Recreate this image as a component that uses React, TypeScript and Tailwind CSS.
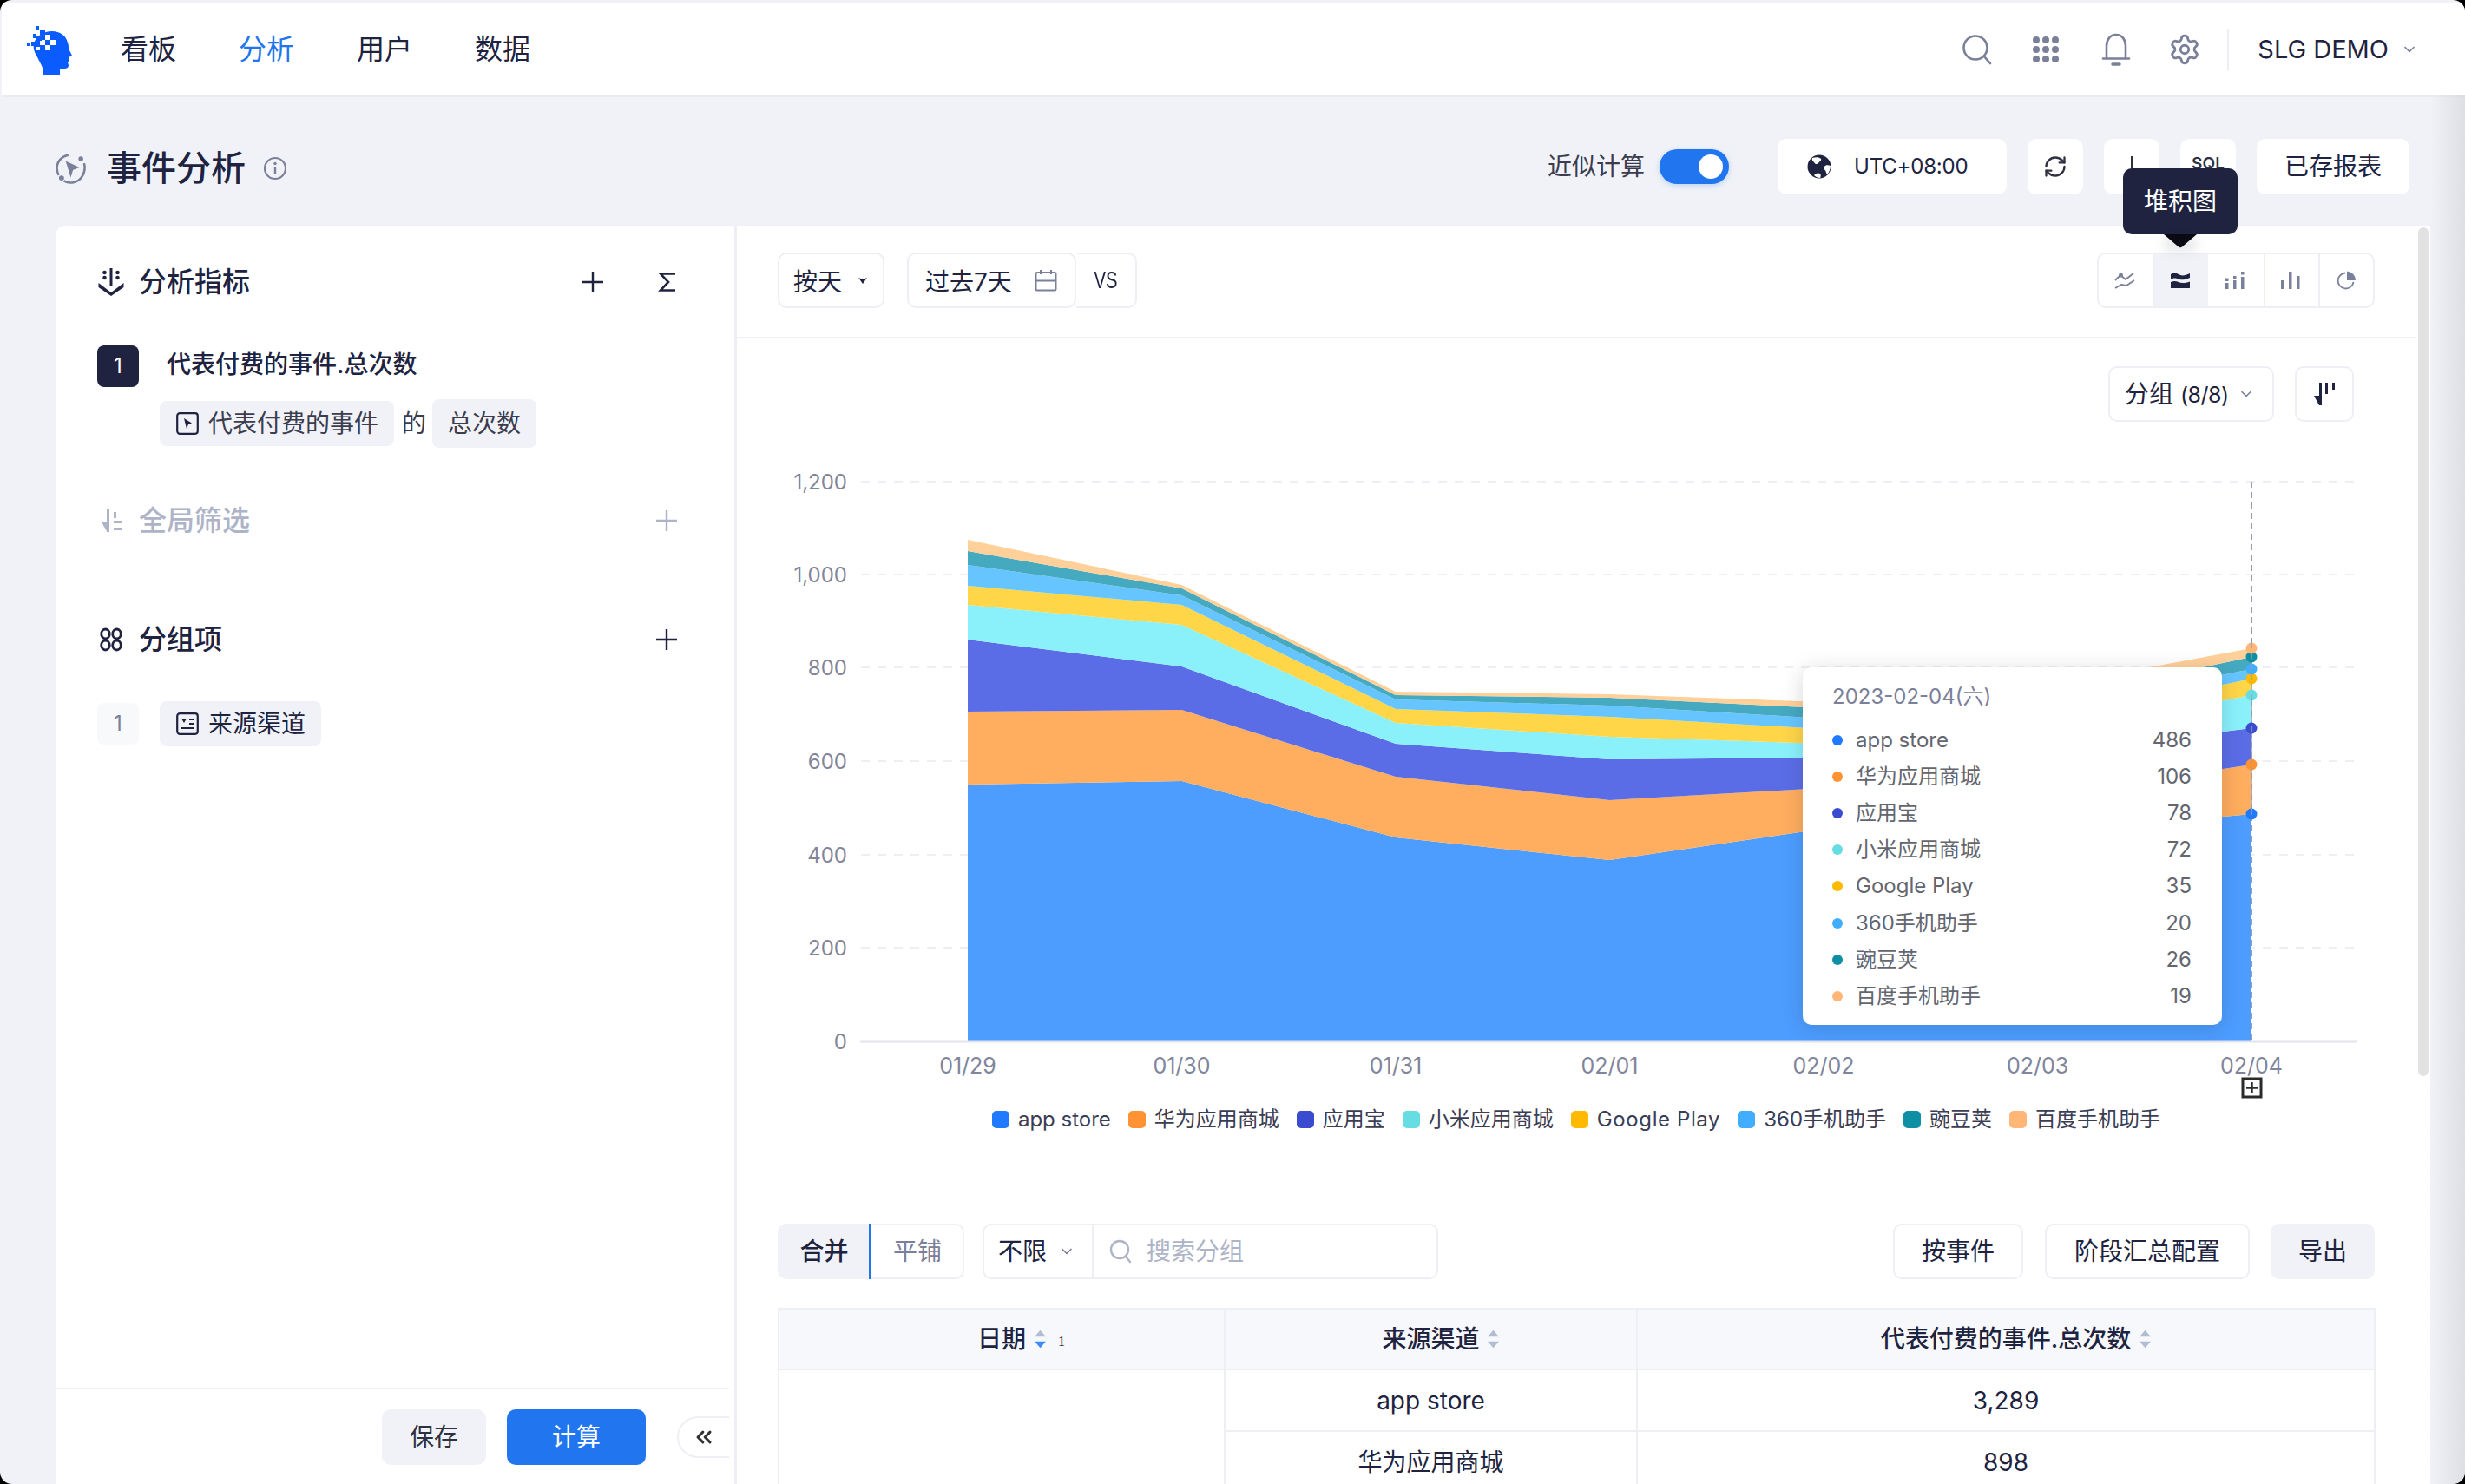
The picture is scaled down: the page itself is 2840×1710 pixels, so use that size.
import React from "react";
import { ChevronDown, Settings, RefreshCw, ChevronsLeft } from "lucide-react";

const xs = [1115, 1361.5, 1608, 1854.5, 2101, 2347.5, 2594];
const series = [
  { name: "app store", value: "486", fill: "#4c9dff", solid: "#1f7aff", tops: [904, 900, 965, 991, 955, 961, 938] },
  { name: "华为应用商城", value: "106", fill: "#ffad5e", solid: "#ff9233", tops: [820, 818, 895, 922, 908, 919, 881] },
  { name: "应用宝", value: "78", fill: "#5b6de6", solid: "#3a4bd0", tops: [737, 768, 857, 875, 873, 870, 839] },
  { name: "小米应用商城", value: "72", fill: "#8af1fb", solid: "#66dde3", tops: [697, 720, 833, 849, 857, 848, 801] },
  { name: "Google Play", value: "35", fill: "#ffd647", solid: "#ffb900", tops: [675, 697, 817, 826, 840, 835, 782] },
  { name: "360手机助手", value: "20", fill: "#66c5ff", solid: "#40adff", tops: [651, 686, 806, 813, 828, 820, 771] },
  { name: "豌豆荚", value: "26", fill: "#45a9c0", solid: "#0f8fa3", tops: [635, 678, 801, 804, 816, 809, 757] },
  { name: "百度手机助手", value: "19", fill: "#ffd099", solid: "#ffb677", tops: [622, 674, 797, 800, 809, 793, 747] },
];
const yTicks = [
  ["1,200", 555],
  ["1,000", 662],
  ["800", 769],
  ["600", 877],
  ["400", 985],
  ["200", 1092],
  ["0", 1200],
] as const;
const xLabels = ["01/29", "01/30", "01/31", "02/01", "02/02", "02/03", "02/04"];

function polygonPoints(i: number) {
  const top = series[i].tops.map((y, k) => `${xs[k]},${y}`);
  const lower = i === 0 ? xs.map((x) => `${x},1199`) : series[i - 1].tops.map((y, k) => `${xs[k]},${y}`);
  return [...top, ...lower.reverse()].join(" ");
}

function Logo() {
  return (
    <svg width="56" height="58" viewBox="0 0 56 58">
      <path
        d="M32 8c9 0 16 5 18 13 1 3 1 5 1 7l4 8-4 2 1 4-2 2 1 3c0 4-3 4-7 4l-3 1v6H21v-8c-2-5-4-8-7-14-3-5-4-9-3-14C14 13 22 8 32 8z"
        fill="#0b5cff"
      />
      <g fill="#fff">
        <rect x="24" y="12" width="6" height="6" />
        <rect x="18" y="18" width="6" height="6" />
        <rect x="30" y="18" width="6" height="6" />
        <rect x="24" y="24" width="6" height="6" />
        <rect x="14" y="26" width="4" height="4" />
      </g>
      <g fill="#0b5cff">
        <rect x="14" y="2" width="3" height="4" />
        <rect x="18" y="7" width="6" height="5" />
        <rect x="10" y="11" width="4" height="5" />
        <rect x="14" y="14" width="6" height="5" />
        <rect x="24" y="18" width="6" height="6" />
        <rect x="3" y="21" width="3" height="4" />
        <rect x="8" y="20" width="5" height="5" />
        <rect x="18" y="24" width="6" height="6" />
      </g>
    </svg>
  );
}

function SearchIcon() {
  return (
    <svg width="36" height="36" viewBox="0 0 36 36" fill="none" stroke="#7a8099" strokeWidth="2.6" strokeLinecap="round">
      <circle cx="16" cy="16" r="13.5" />
      <path d="M26 26l7 8" />
    </svg>
  );
}

function GridIcon() {
  const pts = [6, 17, 28];
  return (
    <svg width="34" height="34" viewBox="0 0 34 34" fill="#7a8099">
      {pts.map((y) => pts.map((x) => <circle key={`${x}-${y}`} cx={x} cy={y} r="4" />))}
    </svg>
  );
}

function BellIcon() {
  return (
    <svg width="36" height="38" viewBox="0 0 36 38" fill="none" stroke="#7a8099" strokeWidth="2.6" strokeLinecap="round">
      <path d="M7 29V15C7 7.5 11.5 2 18 2s11 5.500 11 13v14" />
      <path d="M3 29.500h30" />
      <path d="M14 36h8" strokeWidth="3.500" />
    </svg>
  );
}

function GlobeIcon() {
  return (
    <svg width="28" height="28" viewBox="0 0 28 28">
      <circle cx="14" cy="14" r="13.500" fill="#20233f" />
      <path d="M6 4c4-1 8-1 10 1 1 2-2 3-3 5-2 2-4 1-5-1-1-1-3-3-2-5z" fill="#fff" />
      <path d="M27 13c-3-1-6-1-7 1-2 3 2 4 2 7l1 2c2-2 4-6 4-10z" fill="#fff" />
      <path d="M8 24c2-3 5-3 7-2 1 1 1 3 0 5-3 0-5-1-7-3z" fill="#fff" />
    </svg>
  );
}

function EventIcon() {
  return (
    <svg width="36" height="36" viewBox="0 0 34 34" fill="none" stroke="#7a8099" strokeWidth="2.400">
      <path d="M14 2.500C6 4 1.500 10 1.500 17c0 3 .7 5 2 7.500" />
      <path d="M9 30.500c6 3.500 15 2.500 19.500-4 3-4.500 4-10 2.500-15" />
      <circle cx="27.500" cy="6.500" r="2.600" fill="#7a8099" stroke="none" />
      <circle cx="6.500" cy="27.500" r="2.800" fill="#7a8099" stroke="none" />
      <path d="M11 9l15 7-7 3-2.500 8z" fill="#7a8099" stroke="none" />
    </svg>
  );
}

function InfoIcon() {
  return (
    <svg width="28" height="28" viewBox="0 0 28 28" fill="none" stroke="#7a8099" strokeWidth="2.200">
      <circle cx="14" cy="14" r="12" />
      <path d="M14 12.500v8" strokeWidth="2.400" />
      <circle cx="14" cy="8.500" r="1.700" fill="#7a8099" stroke="none" />
    </svg>
  );
}

function MetricIcon() {
  return (
    <svg width="32" height="34" viewBox="0 0 32 34" fill="#20233f">
      <rect x="14.500" y="1" width="3" height="21" />
      <circle cx="8.500" cy="6" r="2.300" />
      <circle cx="8.500" cy="12" r="2.300" />
      <circle cx="23.500" cy="6" r="2.300" />
      <circle cx="23.500" cy="12" r="2.300" />
      <path d="M1.500 18l14.500 11 14.500-11v5L16 33 1.500 23z" />
    </svg>
  );
}

function FilterIcon() {
  return (
    <svg width="26" height="28" viewBox="0 0 26 28" fill="#aeb4c8">
      <rect x="7" y="1" width="3" height="26" />
      <path d="M7 16v10L1 16z" />
      <rect x="15" y="4" width="3" height="7" />
      <rect x="15" y="14" width="9" height="3" />
      <rect x="15" y="22" width="9" height="3" />
    </svg>
  );
}

function GroupIcon() {
  return (
    <svg width="26" height="28" viewBox="0 0 26 28" fill="none" stroke="#20233f" strokeWidth="2.800">
      <ellipse cx="6.500" cy="7.500" rx="4.800" ry="5.500" />
      <ellipse cx="19.500" cy="7.500" rx="4.800" ry="5.500" />
      <ellipse cx="6.500" cy="20.500" rx="4.800" ry="5.500" />
      <ellipse cx="19.500" cy="20.500" rx="4.800" ry="5.500" />
    </svg>
  );
}

function PlusIcon({ color = "#20233f" }: { color?: string }) {
  return (
    <svg width="26" height="26" viewBox="0 0 26 26" stroke={color} strokeWidth="2.400">
      <path d="M13 1v24M1 13h24" />
    </svg>
  );
}

function SigmaIcon() {
  return (
    <svg width="22" height="24" viewBox="0 0 22 24" fill="none" stroke="#20233f" strokeWidth="2.600">
      <path d="M20 2.500H3l9 9.500-9 9.500h17" />
    </svg>
  );
}

function CursorBox() {
  return (
    <svg width="26" height="26" viewBox="0 0 26 26" fill="none">
      <rect x="1.200" y="1.200" width="23.600" height="23.600" rx="3" stroke="#20233f" strokeWidth="2.200" />
      <path d="M9 7l9 5.500-4 1.500-2 5z" fill="#20233f" />
    </svg>
  );
}

function FieldBox() {
  return (
    <svg width="26" height="26" viewBox="0 0 26 26" fill="none">
      <rect x="1.200" y="1.200" width="23.600" height="23.600" rx="3" stroke="#20233f" strokeWidth="2.200" />
      <path d="M6 7h6l-3 5z" fill="#20233f" />
      <path d="M15 8h5M15 13h5M6 18h14" stroke="#20233f" strokeWidth="2" />
    </svg>
  );
}

function LineIcon() {
  return (
    <svg width="24" height="22" viewBox="0 0 24 22" fill="none" stroke="#7a8099" strokeWidth="1.800">
      <path d="M1 11l6-6 6 5 9-7" />
      <path d="M1 20l7-4 6 1 9-6" />
      <circle cx="7.500" cy="5" r="2.500" fill="#7a8099" stroke="none" />
    </svg>
  );
}

function StackIcon() {
  return (
    <svg width="22" height="18" viewBox="0 0 22 18" fill="#20233f">
      <path d="M0 2c3-2 6-2 9 0s7 2 13-1v5c-6 2.500-9 3-13 1.500S3 6 0 8z" />
      <path d="M0 11c3-1.500 6-1.500 9 0s7 1.500 13-.5V18H0z" />
    </svg>
  );
}

function DotBarIcon() {
  return (
    <svg width="24" height="22" viewBox="0 0 24 22" fill="#7a8099">
      <rect x="1" y="14" width="3.500" height="7" />
      <rect x="1" y="8.500" width="3.500" height="3.500" />
      <rect x="10" y="11" width="3.500" height="10" />
      <rect x="10" y="6" width="3.500" height="3.500" />
      <rect x="19" y="7" width="3.500" height="14" />
      <rect x="19" y="1" width="3.500" height="3.500" />
    </svg>
  );
}

function BarIcon() {
  return (
    <svg width="24" height="22" viewBox="0 0 24 22" fill="#7a8099">
      <rect x="1" y="11" width="3.500" height="10" />
      <rect x="10" y="1" width="3.500" height="20" />
      <rect x="19" y="6" width="3.500" height="15" />
    </svg>
  );
}

function PieIcon() {
  return (
    <svg width="24" height="24" viewBox="0 0 24 24">
      <path d="M11 3.500A9 9 0 1 0 20.500 14" fill="none" stroke="#7a8099" strokeWidth="1.800" />
      <path d="M13 1.500A10.500 10.500 0 0 1 23 12H13z" fill="#7a8099" />
    </svg>
  );
}

function SortDescIcon() {
  return (
    <svg width="26" height="28" viewBox="0 0 26 28" fill="#20233f">
      <rect x="7" y="1" width="3" height="26" />
      <path d="M7 16v11L1 16z" />
      <rect x="14" y="1" width="3" height="13" />
      <rect x="22" y="1" width="3" height="8" />
    </svg>
  );
}

function SortMark({ active = false }: { active?: boolean }) {
  return (
    <svg width="15" height="24" viewBox="0 0 16 26" className="shrink-0">
      <path d="M8 2l7 8H1z" fill="#b0bdd3" />
      <path d="M8 24l7-8H1z" fill={active ? "#3d8bff" : "#b0bdd3"} />
    </svg>
  );
}

function App() {
  return (
    <div className="w-[2840px] h-[1710px] bg-black overflow-hidden font-['Inter','Noto_Sans_CJK_SC',sans-serif] text-[#20233f]">
      <div className="relative w-full h-full rounded-[14px] overflow-hidden bg-[#f0f2f7] pt-[3px] pl-[2px] flex flex-col">
        {/* top bar */}
        <header className="h-[109px] shrink-0 bg-white border-b-2 border-[#e9ebf1] flex items-center pl-[26px] pr-[54px]">
          <Logo />
          <nav className="flex items-center gap-[72px] ml-[55px] text-[32px]">
            <span>看板</span>
            <span className="text-[#2176f0]">分析</span>
            <span>用户</span>
            <span>数据</span>
          </nav>
          <div className="ml-auto flex items-center">
            <SearchIcon />
            <div className="ml-[44px]"><GridIcon /></div>
            <div className="ml-[46px]"><BellIcon /></div>
            <Settings size={38} strokeWidth={1.8} color="#7a8099" className="ml-[42px]" />
            <div className="w-[2px] h-[48px] bg-[#eceef3] ml-[30px]" />
            <span className="ml-[33px] text-[29px]">SLG DEMO</span>
            <ChevronDown size={20} color="#7a8099" className="ml-[14px]" />
          </div>
        </header>

        {/* page header */}
        <div className="h-[148px] shrink-0 flex items-start pt-[48px] pl-[62px] pr-[64px]">
          <div className="h-[64px] flex items-center mt-[2px]">
            <EventIcon />
            <h1 className="ml-[23px] text-[40px] font-medium leading-none">事件分析</h1>
            <div className="ml-[20px]"><InfoIcon /></div>
          </div>
          <div className="ml-auto flex items-center h-[64px]">
            <span className="text-[28px] text-[#3b3d4f]">近似计算</span>
            <div className="ml-[17px] w-[80px] h-[40px] rounded-full bg-[#2176f0] flex items-center justify-end pr-[7px] shadow-[0_2px_6px_rgba(33,118,240,0.25)]">
              <div className="w-[28px] h-[28px] rounded-full bg-white" />
            </div>
            <div className="ml-[56px] w-[264px] h-[64px] rounded-[10px] bg-white flex items-center pl-[34px]">
              <GlobeIcon />
              <span className="ml-[26px] text-[24px] tracking-[-0.2px]">UTC+08:00</span>
            </div>
            <div className="ml-[24px] w-[64px] h-[64px] rounded-[10px] bg-white flex items-center justify-center">
              <RefreshCw size={28} strokeWidth={2} color="#2f3040" />
            </div>
            <div className="ml-[24px] w-[64px] h-[64px] rounded-[10px] bg-white flex justify-center pt-[20px]">
              <div className="w-[3px] h-[24px] bg-[#2f3040]" />
            </div>
            <div className="ml-[24px] w-[64px] h-[64px] rounded-[10px] bg-white flex justify-center pt-[15px] text-[19px] font-semibold text-[#2f3040]">
              SQL
            </div>
            <div className="ml-[24px] w-[176px] h-[64px] rounded-[10px] bg-white flex items-center justify-center text-[28px]">
              已存报表
            </div>
          </div>
        </div>

        {/* main */}
        <main className="flex-1 min-h-0 flex pl-[62px] pr-[40px]">
          {/* left panel */}
          <aside className="w-[785px] shrink-0 h-full bg-white rounded-tl-[12px] border-r-[3px] border-[#eeeff4] flex flex-col">
            <div className="pl-[48px] pr-[65px] pt-[41px]">
              <div className="h-[48px] flex items-center">
                <MetricIcon />
                <span className="ml-[16px] text-[32px] font-medium">分析指标</span>
                <div className="ml-auto flex items-center">
                  <PlusIcon />
                  <div className="ml-[62px] mr-[1px]"><SigmaIcon /></div>
                </div>
              </div>

              <div className="mt-[49px] h-[48px] flex items-center">
                <div className="w-[48px] h-[48px] rounded-[8px] bg-[#20233f] text-white text-[24px] flex items-center justify-center">1</div>
                <span className="ml-[32px] text-[28px] font-medium leading-[44px] -mt-[4px]">代表付费的事件.总次数</span>
              </div>
              <div className="mt-[14px] h-[56px] pl-[72px] flex items-center text-[28px] text-[#3b3d4f]">
                <div className="w-[270px] h-[52px] rounded-[8px] bg-[#f1f2f7] flex items-center pl-[19px]">
                  <CursorBox />
                  <span className="ml-[11px]">代表付费的事件</span>
                </div>
                <span className="ml-[9px]">的</span>
                <div className="ml-[7px] w-[120px] h-[56px] rounded-[8px] bg-[#f1f2f7] flex items-center justify-center">总次数</div>
              </div>

              <div className="mt-[60px] h-[48px] flex items-center text-[#aeb4c8]">
                <div className="ml-[4px]"><FilterIcon /></div>
                <span className="ml-[18px] text-[32px] font-medium">全局筛选</span>
                <div className="ml-auto"><PlusIcon color="#aeb4c8" /></div>
              </div>

              <div className="mt-[89px] h-[48px] flex items-center">
                <div className="ml-[3px]"><GroupIcon /></div>
                <span className="ml-[19px] text-[32px] font-medium">分组项</span>
                <div className="ml-auto"><PlusIcon /></div>
              </div>

              <div className="mt-[47px] h-[52px] flex items-center">
                <div className="w-[48px] h-[48px] rounded-[8px] bg-[#f8f9fb] text-[#7a8099] text-[24px] flex items-center justify-center">1</div>
                <div className="ml-[24px] w-[186px] h-[52px] rounded-[8px] bg-[#f1f2f7] flex items-center pl-[19px] text-[28px]">
                  <FieldBox />
                  <span className="ml-[11px]">来源渠道</span>
                </div>
              </div>
            </div>

            <div className="mt-auto h-[111px] w-[776px] border-t-2 border-[#eeeff4] flex justify-end pt-[23px]">
              <button className="w-[120px] h-[64px] rounded-[10px] bg-[#f1f2f7] text-[28px] text-[#2f3040]">保存</button>
              <button className="ml-[24px] w-[160px] h-[64px] rounded-[10px] bg-[#2176f0] text-[28px] text-white">计算</button>
              <div className="ml-[36px] mt-[8px] w-[60px] h-[48px] rounded-l-full border-2 border-r-0 border-[#eeeff4] flex items-center justify-center">
                <ChevronsLeft size={28} strokeWidth={2.6} color="#333" />
              </div>
            </div>
          </aside>

          {/* right panel */}
          <section className="relative flex-1 min-w-0 h-full bg-white overflow-hidden">
            <div className="w-[1935px]">
              <div className="h-[130px] border-b-2 border-[#eeeff4] flex items-center pl-[47px] pr-[48px] pb-[2px]">
                <div className="w-[123px] h-[64px] border-2 border-[#eeeff4] rounded-[10px] flex items-center pl-[16px] text-[28px]">
                  <span className="mt-[3px]">按天</span>
                  <svg width="12" height="10" viewBox="0 0 12 10" className="ml-[18px]" fill="#20233f"><path d="M1 2l5 2 5-2-5 7z" /></svg>
                </div>
                <div className="ml-[26px] w-[195px] h-[64px] border-2 border-[#eeeff4] rounded-[10px] flex items-center pl-[19px] text-[28px]">
                  <span className="mt-[3px]">过去7天</span>
                  <svg width="26" height="26" viewBox="0 0 26 26" className="ml-[26px]" fill="none" stroke="#7a8099" strokeWidth="2">
                    <rect x="1.500" y="4" width="23" height="20.500" rx="1.500" />
                    <path d="M1.500 13.500h23M7 1v5M19 1v5" />
                  </svg>
                </div>
                <div className="w-[70px] h-[64px] border-2 border-l-0 border-[#eeeff4] rounded-r-[10px] flex items-center justify-center text-[27px] font-['Liberation_Sans',sans-serif]">
                  <span className="inline-block scale-x-75">VS</span>
                </div>
                <div className="ml-auto w-[320px] h-[64px] border-2 border-[#eeeff4] rounded-[10px] grid grid-cols-5">
                  <div className="flex items-center justify-center pr-[4px]"><LineIcon /></div>
                  <div className="border-l-2 border-[#eeeff4] bg-[#f1f2f7] flex items-center justify-center pr-[3px]"><StackIcon /></div>
                  <div className="flex items-center justify-center pr-[2px]"><DotBarIcon /></div>
                  <div className="border-l-2 border-[#eeeff4] flex items-center justify-center pr-[2px]"><BarIcon /></div>
                  <div className="border-l-2 border-[#eeeff4] flex items-center justify-center"><PieIcon /></div>
                </div>
              </div>

              <div className="mt-[32px] h-[64px] flex justify-end gap-[24px] pr-[72px]">
                <div className="w-[191px] h-[64px] border-2 border-[#eeeff4] rounded-[10px] flex items-center pl-[17px] text-[28px]">
                  <span>分组 <span className="text-[25px] tracking-[-0.5px]">(8/8)</span></span>
                  <ChevronDown size={20} color="#7a8099" className="ml-[10px]" />
                </div>
                <div className="w-[68px] h-[64px] border-2 border-[#eeeff4] rounded-[10px] flex items-center justify-center">
                  <SortDescIcon />
                </div>
              </div>

              <div className="relative h-[774px]">
                <svg width="1935" height="774" viewBox="849 486 1935 774" className="block overflow-visible">
                  {yTicks.slice(0, 6).map(([, y]) => (
                    <line key={y} x1="992" x2="2716" y1={y} y2={y} stroke="#eeeff6" strokeWidth="2" strokeDasharray="10 9" />
                  ))}
                  {series.map((s, i) => (
                    <polygon key={s.name} points={polygonPoints(i)} fill={s.fill} />
                  ))}
                  <line x1="991" x2="2716" y1="1200" y2="1200" stroke="#e2e3ec" strokeWidth="3" />
                  {yTicks.map(([t, y]) => (
                    <text key={t} x="976" y={y} textAnchor="end" dominantBaseline="central" fontSize="24" fill="#7f859c">{t}</text>
                  ))}
                  {xLabels.map((t, i) => (
                    <text key={t} x={xs[i]} y="1228" textAnchor="middle" dominantBaseline="central" fontSize="25" fill="#7f859c">{t}</text>
                  ))}
                  <line x1="2594" x2="2594" y1="555" y2="1200" stroke="#9a9db0" strokeWidth="2" strokeDasharray="7 5" />
                  {series.map((s) => (
                    <circle key={s.name} cx="2594" cy={s.tops[6]} r="6.500" fill={s.solid} />
                  ))}
                  <line x1="2594" x2="2594" y1="740" y2="945" stroke="#9a9db0" strokeWidth="1.500" strokeDasharray="7 5" />
                  <rect x="2584" y="1243" width="21" height="21" fill="#fff" stroke="#2b2b2b" strokeWidth="3" />
                  <path d="M2594.500 1247v13M2588 1253.500h13" stroke="#2b2b2b" strokeWidth="2.400" />
                </svg>

                {/* hover tooltip */}
                <div className="absolute left-[1228px] top-[283px] w-[483px] h-[412px] bg-white rounded-[10px] shadow-[0_4px_24px_rgba(32,35,63,0.18)] px-[34px] pt-[20px]">
                  <div className="h-[28px] leading-[28px] text-[24px] text-[#7a8099]">2023-02-04(六)</div>
                  <div className="mt-[15px]">
                    {series.map((s) => (
                      <div key={s.name} className="h-[42.100px] flex items-center text-[24px] text-[#63666f]">
                        <div className="w-[12px] h-[12px] rounded-full" style={{ backgroundColor: s.solid }} />
                        <span className="ml-[15px]">{s.name}</span>
                        <span className="ml-auto mr-[1px]">{s.value}</span>
                      </div>
                    ))}
                  </div>
                </div>
              </div>

              {/* legend */}
              <div className="mt-[10px] h-[40px] pl-[47px] pr-[48px] flex items-center justify-center gap-[20px]">
                {series.map((s) => (
                  <div key={s.name} className="flex items-center gap-[10px] text-[24px] text-[#3b3d55]">
                    <div className="w-[20px] h-[20px] rounded-[5px]" style={{ backgroundColor: s.solid }} />
                    <span className={s.name === "Google Play" ? "tracking-[0.6px]" : ""}>{s.name}</span>
                  </div>
                ))}
              </div>

              {/* table toolbar */}
              <div className="mt-[100px] h-[64px] pl-[47px] pr-[48px] flex items-center text-[28px]">
                <div className="w-[107px] h-[64px] rounded-l-[10px] bg-[#f1f2f7] border-r-2 border-[#2176f0] flex items-center justify-center font-medium pl-[2px]">合并</div>
                <div className="w-[108px] h-[64px] rounded-r-[10px] border-2 border-l-0 border-[#eeeff4] flex items-center justify-center text-[#7a8099] pl-[2px]">平铺</div>
                <div className="ml-[21px] w-[525px] h-[64px] rounded-[10px] border-2 border-[#eeeff4] flex items-center">
                  <div className="w-[126px] h-full border-r-2 border-[#eeeff4] flex items-center pl-[16px]">
                    不限
                    <ChevronDown size={20} color="#7a8099" className="ml-[13px]" />
                  </div>
                  <svg width="26" height="28" viewBox="0 0 26 28" fill="none" stroke="#aeb4c8" strokeWidth="2.400" strokeLinecap="round" className="ml-[18px]">
                    <circle cx="12" cy="12" r="10" />
                    <path d="M19 20l5 6" />
                  </svg>
                  <span className="ml-[17px] text-[#aeb4c8]">搜索分组</span>
                </div>
                <div className="ml-auto w-[150px] h-[64px] rounded-[10px] border-2 border-[#eeeff4] flex items-center justify-center">按事件</div>
                <div className="ml-[25px] w-[236px] h-[64px] rounded-[10px] border-2 border-[#eeeff4] flex items-center justify-center">阶段汇总配置</div>
                <div className="ml-[24px] w-[120px] h-[64px] rounded-[10px] bg-[#f1f2f7] flex items-center justify-center">导出</div>
              </div>

              {/* table */}
              <div className="mt-[33px] pl-[47px] pr-[48px]">
                <table className="w-[1839px] table-fixed border-collapse text-[28px] text-center">
                  <colgroup>
                    <col className="w-[514px]" />
                    <col className="w-[475px]" />
                    <col className="w-[850px]" />
                  </colgroup>
                  <thead>
                    <tr className="h-[70px] bg-[#f7f8fb]">
                      <th className="border-2 border-[#eeeff4] font-medium">
                        <span className="relative inline-block">
                          日期
                          <span className="absolute left-full top-1/2 -translate-y-1/2 ml-[9px] flex items-center">
                            <SortMark active />
                            <span className="ml-[13px] mt-[6px] text-[16px] font-normal font-['Liberation_Serif',serif]">1</span>
                          </span>
                        </span>
                      </th>
                      <th className="border-2 border-[#eeeff4] font-medium">
                        <span className="relative inline-block">
                          来源渠道
                          <span className="absolute left-full top-1/2 -translate-y-1/2 ml-[8px] flex"><SortMark /></span>
                        </span>
                      </th>
                      <th className="border-2 border-[#eeeff4] font-medium">
                        <span className="relative inline-block">
                          代表付费的事件.总次数
                          <span className="absolute left-full top-1/2 -translate-y-1/2 ml-[9px] flex"><SortMark /></span>
                        </span>
                      </th>
                    </tr>
                  </thead>
                  <tbody>
                    <tr className="h-[71px]">
                      <td rowSpan={2} className="border-2 border-[#eeeff4]" />
                      <td className="border-2 border-[#eeeff4]">app store</td>
                      <td className="border-2 border-[#eeeff4]">3,289</td>
                    </tr>
                    <tr className="h-[71px]">
                      <td className="border-2 border-[#eeeff4]">华为应用商城</td>
                      <td className="border-2 border-[#eeeff4]">898</td>
                    </tr>
                  </tbody>
                </table>
              </div>
            </div>

            {/* scrollbar */}
            <div className="absolute right-[2px] top-[2px] w-[12px] h-[978px] rounded-full bg-[#e2e2e2]" />
          </section>
        </main>

        {/* right edge shade */}
        <div className="absolute right-0 top-[110px] bottom-0 w-[40px] bg-linear-to-r from-transparent to-[#d6d7dd]/70 pointer-events-none" />

        {/* chart-type tooltip */}
        <div className="absolute left-[2446px] top-[194px] w-[132px] h-[76px] rounded-[10px] bg-[#20233f] text-white text-[28px] flex items-center justify-center">
          堆积图
          <div className="absolute left-[46px] top-[76px] w-[40px] h-[16px] rounded-full bg-[#20233f]/10 blur-[6px] mt-[4px]" />
          <svg width="40" height="16" viewBox="0 0 40 16" className="absolute left-[46px] top-[76px]">
            <path d="M1 0h38L22 14.500c-1 1-3 1-4 0z" fill="#0a0a14" />
          </svg>
        </div>
      </div>
    </div>
  );
}

export default App;
